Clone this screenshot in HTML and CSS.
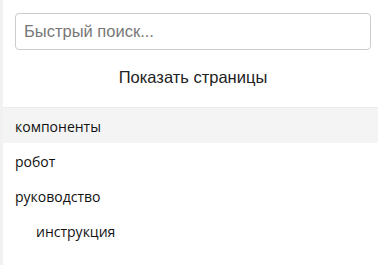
FILE: index.html
```html
<!DOCTYPE html>
<html>

<head>
	<link rel="stylesheet" href="styles.css">
</head>

<body>
	<div class="sidebar">
		<div class="top">
			<input class="search" type="text" placeholder="Быстрый поиск..." />
			<div class="toggle">Показать страницы</div>
		</div>
		<ul class="pages">
			<li class="active">компоненты</li>
			<li>робот</li>
			<li>руководство</li>
			<li class="sub">инструкция</li>
		</ul>
	</div>
</body>

</html>
```

FILE: styles.css
```css
body {
	margin: 0;
	background-color: #fff;
}

.sidebar {
	width: 375px;
	height: 265px;
	border-left: solid 3px #f1f1f1;
}

.top {
	padding: 13px 7px 0 12px;
	border-bottom: solid 1px #ececec;
	height: 108px;
	box-sizing: border-box;
}

.search {
	display: block;
	width: 100%;
	height: 37px;
	box-sizing: border-box;
	padding: 0 8px;
	border: solid 1px #ccc;
	border-radius: 4px;
	font-family: "Liberation Sans", Arial, sans-serif;
	font-size: 16.5px;
	color: #333;
}

.search::placeholder {
	color: #777;
}

.toggle {
	text-align: center;
	margin-top: 18px;
	font-family: "Liberation Sans", Arial, sans-serif;
	font-size: 16.5px;
	color: #222;
}

.pages {
	list-style: none;
	margin: 0;
	padding: 0;
	font-family: "Open Sans", "Noto Sans", sans-serif;
	font-size: 14px;
	color: #111;
}

.pages li {
	height: 35px;
	line-height: 35px;
	padding-left: 12px;
	padding-top: 1px;
	box-sizing: border-box;
}

.pages li.active {
	background-color: #f4f4f4;
}

.pages li.sub {
	padding-left: 33px;
}
```
